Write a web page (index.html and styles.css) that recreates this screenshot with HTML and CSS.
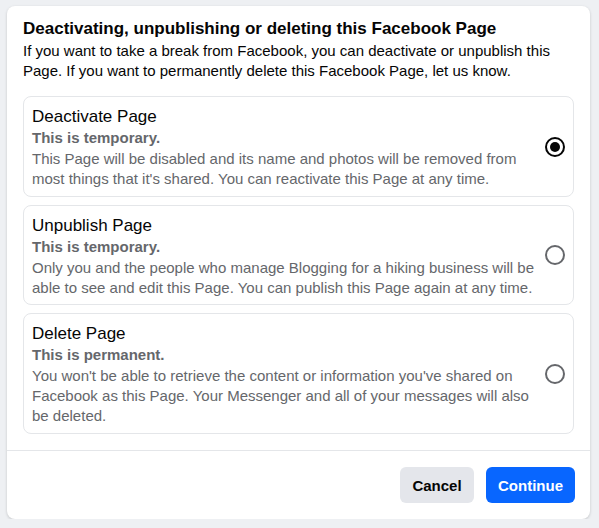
FILE: index.html
```html
<!DOCTYPE html>
<html lang="en">
<head>
<meta charset="utf-8">
<title>Deactivate or delete Page</title>
<link rel="stylesheet" href="styles.css">
</head>
<body>
<div class="dialog">
  <div class="body">
    <h2 class="title">Deactivating, unpublishing or deleting this Facebook Page</h2>
    <p class="intro">If you want to take a break from Facebook, you can deactivate or unpublish this Page. If you want to permanently delete this Facebook Page, let us know.</p>
    <div class="options">
      <label class="option">
        <div class="text">
          <div class="name">Deactivate Page</div>
          <div class="sub">This is temporary.</div>
          <div class="desc">This Page will be disabled and its name and photos will be removed from most things that it's shared. You can reactivate this Page at any time.</div>
        </div>
        <span class="radio checked"></span>
      </label>
      <label class="option">
        <div class="text">
          <div class="name">Unpublish Page</div>
          <div class="sub">This is temporary.</div>
          <div class="desc">Only you and the people who manage Blogging for a hiking business will be able to see and edit this Page. You can publish this Page again at any time.</div>
        </div>
        <span class="radio"></span>
      </label>
      <label class="option">
        <div class="text">
          <div class="name">Delete Page</div>
          <div class="sub">This is permanent.</div>
          <div class="desc">You won't be able to retrieve the content or information you've shared on Facebook as this Page. Your Messenger and all of your messages will also be deleted.</div>
        </div>
        <span class="radio"></span>
      </label>
    </div>
  </div>
  <div class="footer">
    <button class="btn cancel">Cancel</button>
    <button class="btn primary">Continue</button>
  </div>
</div>
</body>
</html>
```
FILE: styles.css
```css
html, body {
  margin: 0;
  padding: 0;
  background: #eef0f3;
  font-family: "Liberation Sans", Arial, sans-serif;
  color: #050505;
}
body {
  padding: 6px 9px 0 7px;
}
.dialog {
  width: 583px;
  background: #ffffff;
  border-radius: 8px;
  box-shadow: 0 1px 3px rgba(0, 0, 0, 0.18);
}
.body {
  padding: 12px 16px 16.5px 16px;
}
.title {
  margin: 0;
  font-size: 17px;
  line-height: 22px;
  font-weight: bold;
}
.intro {
  margin: 1px 0 0 0;
  font-size: 15px;
  line-height: 20px;
}
.options {
  margin-top: 15px;
  display: flex;
  flex-direction: column;
  gap: 8px;
}
.option {
  display: flex;
  align-items: center;
  border: 1px solid #e4e6e9;
  border-radius: 8px;
  padding: 9px 8px 6.5px 8px;
  gap: 8px;
}
.text {
  flex: 1;
}
.name {
  font-size: 17px;
  line-height: 22px;
}
.sub {
  font-size: 15px;
  line-height: 20px;
  font-weight: bold;
  color: #65676b;
}
.desc {
  margin-top: 1px;
  font-size: 15px;
  line-height: 20px;
  color: #65676b;
}
.radio {
  width: 20px;
  height: 20px;
  box-sizing: border-box;
  border-radius: 50%;
  border: 2px solid #65676b;
  flex: none;
  position: relative;
  margin-top: -2px;
}
.radio.checked {
  border-color: #050505;
}
.radio.checked::after {
  content: "";
  position: absolute;
  left: 3px;
  top: 3px;
  width: 10px;
  height: 10px;
  border-radius: 50%;
  background: #050505;
}
.footer {
  border-top: 1px solid #e4e6e9;
  display: flex;
  justify-content: flex-end;
  gap: 12px;
  padding: 16px 15px 16px 16px;
}
.btn {
  height: 36px;
  border: none;
  border-radius: 6px;
  font-family: "Liberation Sans", Arial, sans-serif;
  font-size: 15px;
  font-weight: bold;
  padding: 0 12px;
}
.cancel {
  background: #e4e6eb;
  color: #050505;
  width: 74px;
}
.primary {
  background: #0866ff;
  color: #ffffff;
  width: 89px;
}
```
